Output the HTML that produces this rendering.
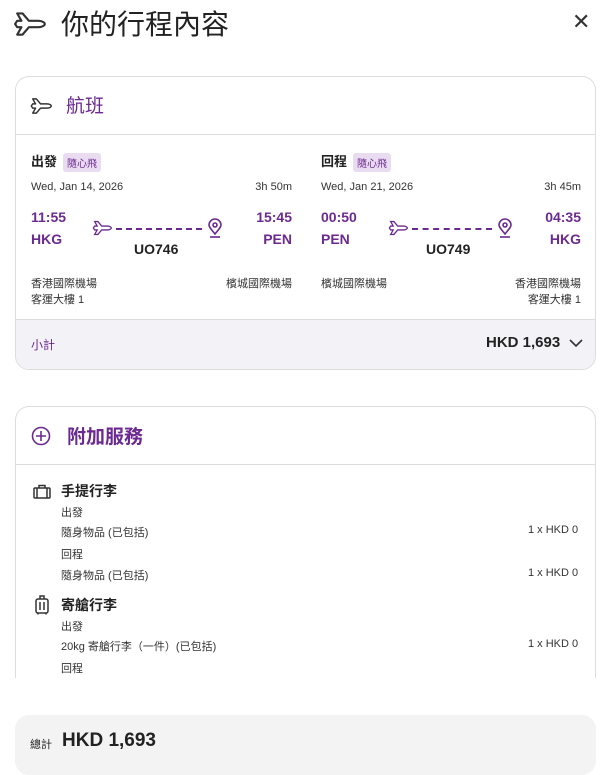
<!DOCTYPE html><html><head><meta charset="utf-8"><style>
*{margin:0;padding:0;box-sizing:border-box}
body{width:600px;height:771px;background:#fff;font-family:"Liberation Sans","Noto Sans CJK TC",sans-serif;color:#222;position:relative;overflow:hidden}
.abs{position:absolute}
.p{color:#6c2a91}
.b{font-weight:bold}
.tag{display:inline-block;background:#e9dcf0;color:#6c2a91;font-size:10px;padding:2px 4px;border-radius:3px;vertical-align:middle;margin-left:6px;font-weight:normal}
.card{position:absolute;left:15px;width:581px;border:1px solid #ddd;border-radius:14px;overflow:hidden;background:#fff}
.s{font-size:11px;color:#333}
.dash{position:absolute;border-top:2px dashed #6c2a91;height:0}
.r{text-align:right}
</style></head><body>
<svg class="abs" style="left:14px;top:9px" width="34" height="30" viewBox="0 0 32 28" fill="none" stroke="#333" stroke-width="2" stroke-linejoin="round"><path d="M3 4l5 0 6 7h9c4 0 6 2 6 3s-2 3-6 3h-9l-6 7H3l4-7H3l-2-3 2-3h4z"/></svg>
<div class="abs" style="left:61px;top:3px;font-size:28px;color:#222">你的行程內容</div>
<div class="abs" style="left:572px;top:9px;font-size:22px;color:#333">✕</div>

<div class="card" style="top:76px;height:294px">
 <svg class="abs" style="left:14px;top:19px" width="24" height="20" viewBox="0 0 32 28" fill="none" stroke="#333" stroke-width="2" stroke-linejoin="round"><path d="M3 4l5 0 6 7h9c4 0 6 2 6 3s-2 3-6 3h-9l-6 7H3l4-7H3l-2-3 2-3h4z"/></svg>
 <div class="abs p" style="left:50px;top:14px;font-size:19px">航班</div>
 <div class="abs" style="left:0;top:57px;width:100%;border-top:1px solid #ddd"></div>
 <div class="abs b" style="left:15px;top:74px;font-size:13px">出發<span class="tag">隨心飛</span></div>
 <div class="abs s" style="left:15px;top:104px">Wed, Jan 14, 2026</div>
 <div class="abs s r" style="left:200px;width:76px;top:104px">3h 50m</div>
 <div class="abs p b" style="left:15px;top:132px;font-size:14px">11:55</div>
 <div class="abs p b" style="left:15px;top:154px;font-size:14px">HKG</div>
 <div class="abs p b r" style="left:200px;width:76px;top:132px;font-size:14px">15:45</div>
 <div class="abs p b r" style="left:200px;width:76px;top:154px;font-size:14px">PEN</div>
 <svg class="abs" style="left:76px;top:142px" width="22" height="18" viewBox="0 0 32 28" fill="none" stroke="#6c2a91" stroke-width="2"><path d="M3 4l5 0 6 7h9c4 0 6 2 6 3s-2 3-6 3h-9l-6 7H3l4-7H3l-2-3 2-3h4z"/></svg>
 <div class="dash" style="left:100px;top:151px;width:86px"></div>
 <svg class="abs" style="left:190px;top:141px" width="18" height="22" viewBox="0 0 18 22" fill="none" stroke="#6c2a91" stroke-width="1.6"><path d="M9 16C5 11 3 9 3 7a6 6 0 0 1 12 0c0 2-2 4-6 9z"/><circle cx="9" cy="7" r="2"/><path d="M4 19h10"/></svg>
 <div class="abs b" style="left:118px;top:164px;font-size:14px">UO746</div>
 <div class="abs s" style="left:15px;top:198px">香港國際機場<br>客運大樓 1</div>
 <div class="abs s r" style="left:176px;width:100px;top:198px">檳城國際機場</div>

 <div class="abs b" style="left:305px;top:74px;font-size:13px">回程<span class="tag">隨心飛</span></div>
 <div class="abs s" style="left:305px;top:104px">Wed, Jan 21, 2026</div>
 <div class="abs s r" style="left:489px;width:76px;top:104px">3h 45m</div>
 <div class="abs p b" style="left:305px;top:132px;font-size:14px">00:50</div>
 <div class="abs p b" style="left:305px;top:154px;font-size:14px">PEN</div>
 <div class="abs p b r" style="left:489px;width:76px;top:132px;font-size:14px">04:35</div>
 <div class="abs p b r" style="left:489px;width:76px;top:154px;font-size:14px">HKG</div>
 <svg class="abs" style="left:372px;top:142px" width="22" height="18" viewBox="0 0 32 28" fill="none" stroke="#6c2a91" stroke-width="2"><path d="M3 4l5 0 6 7h9c4 0 6 2 6 3s-2 3-6 3h-9l-6 7H3l4-7H3l-2-3 2-3h4z"/></svg>
 <div class="dash" style="left:396px;top:151px;width:80px"></div>
 <svg class="abs" style="left:480px;top:141px" width="18" height="22" viewBox="0 0 18 22" fill="none" stroke="#6c2a91" stroke-width="1.6"><path d="M9 16C5 11 3 9 3 7a6 6 0 0 1 12 0c0 2-2 4-6 9z"/><circle cx="9" cy="7" r="2"/><path d="M4 19h10"/></svg>
 <div class="abs b" style="left:410px;top:164px;font-size:14px">UO749</div>
 <div class="abs s" style="left:305px;top:198px">檳城國際機場</div>
 <div class="abs s r" style="left:465px;top:198px;width:100px">香港國際機場<br>客運大樓 1</div>

 <div class="abs" style="left:0;top:242px;width:100%;height:52px;background:#f3f2f7;border-top:1px solid #ddd"></div>
 <div class="abs p" style="left:15px;top:259px;font-size:12px">小計</div>
 <div class="abs b" style="left:470px;top:257px;font-size:15px;color:#222">HKD 1,693</div>
 <svg class="abs" style="left:553px;top:261px" width="14" height="10" viewBox="0 0 14 10" fill="none" stroke="#333" stroke-width="1.6"><path d="M1 2l6 6 6-6"/></svg>
</div>

<div class="card" style="top:406px;height:300px;border-bottom:none">
 <svg class="abs" style="left:15px;top:19px" width="20" height="20" viewBox="0 0 20 20" fill="none" stroke="#6c2a91" stroke-width="1.6"><circle cx="10" cy="10" r="8.5"/><path d="M10 5v10M5 10h10"/></svg>
 <div class="abs p b" style="left:51px;top:15px;font-size:19px">附加服務</div>
 <div class="abs" style="left:0;top:57px;width:100%;border-top:1px solid #ddd"></div>
 <svg class="abs" style="left:17px;top:77px" width="18" height="15" viewBox="0 0 18 15" fill="none" stroke="#333" stroke-width="1.5"><rect x="1" y="4" width="16" height="10" rx="1"/><path d="M6 4V1.5h6V4M4 4v10M14 4v10"/></svg>
 <div class="abs b" style="left:45px;top:74px;font-size:14px">手提行李</div>
 <div class="abs s" style="left:45px;top:97px">出發</div>
 <div class="abs s" style="left:45px;top:117px">隨身物品 (已包括)</div>
 <div class="abs s" style="left:512px;top:117px">1 x HKD 0</div>
 <div class="abs s" style="left:45px;top:139px">回程</div>
 <div class="abs s" style="left:45px;top:160px">隨身物品 (已包括)</div>
 <div class="abs s" style="left:512px;top:160px">1 x HKD 0</div>
 <svg class="abs" style="left:19px;top:188px" width="14" height="20" viewBox="0 0 14 20" fill="none" stroke="#333" stroke-width="1.5"><rect x="1" y="4" width="12" height="14" rx="2"/><path d="M5 4V1h4v3M5 7v8M9 7v8M3 18v1.5M11 18v1.5"/></svg>
 <div class="abs b" style="left:45px;top:188px;font-size:14px">寄艙行李</div>
 <div class="abs s" style="left:45px;top:211px">出發</div>
 <div class="abs s" style="left:45px;top:231px">20kg 寄艙行李（一件）(已包括)</div>
 <div class="abs s" style="left:512px;top:231px">1 x HKD 0</div>
 <div class="abs s" style="left:45px;top:253px">回程</div>
 <div class="abs" style="left:0;top:272px;width:100%;height:40px;background:#fff"></div>
</div>
<div class="abs" style="left:0;top:678px;width:600px;height:37px;background:#fff"></div>

<div class="abs" style="left:15px;top:715px;width:581px;height:60px;background:#f3f3f3;border-radius:14px"></div>
<div class="abs" style="left:30px;top:736px;font-size:11px">總計</div>
<div class="abs b" style="left:62px;top:730px;font-size:19px;color:#222">HKD 1,693</div>
</body></html>
